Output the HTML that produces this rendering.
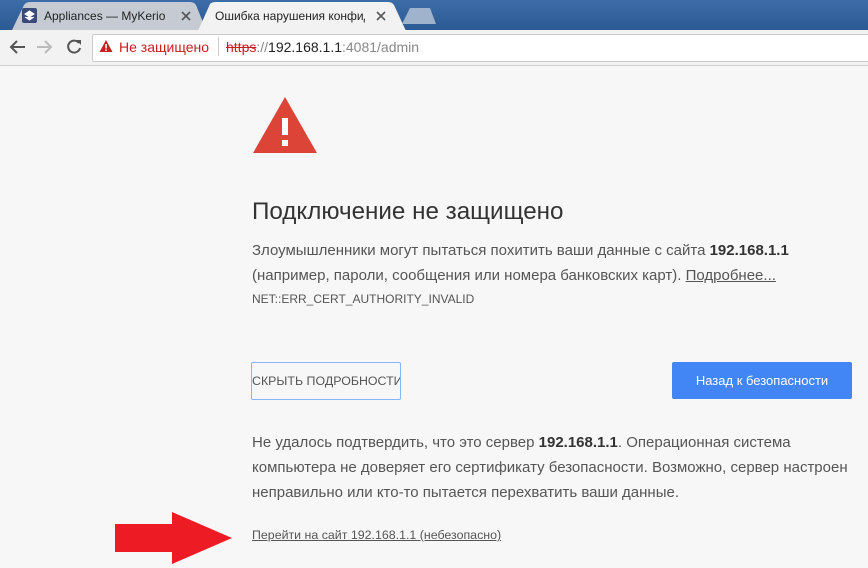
<!DOCTYPE html><html><head><meta charset="utf-8"><style>
body{margin:0;width:868px;height:568px;overflow:hidden;background:#f7f7f7;font-family:"Liberation Sans","Noto Sans CJK SC",sans-serif;position:relative}
.a{position:absolute}
.top{left:0;top:0;width:868px;height:30px;background:linear-gradient(#3c6ca7,#2c5a93)}
.tb{left:0;top:30px;width:868px;height:35px;background:#f2f2f2;border-bottom:1px solid #d0d0d0}
.t{font-size:12px;color:#222;white-space:nowrap}
p{margin:0}
.txt{font-size:15px;color:#555;line-height:25px}
</style></head><body>
<div class="a top"></div>
<svg class="a" style="left:0;top:0" width="868" height="31">
<path d="M12 30 L24 5 Q26 2 30 2 L190 2 Q194 2 196 5 L206 30 Z" fill="#c6cbd3"/>
<path d="M198 31 L210 4 Q212 2 216 2 L388 2 Q392 2 394 5 L406 31 Z" fill="#f2f2f2"/>
<path d="M402 24 L410 8 L430 8 L436 24 Z" fill="#9fb3cc"/>
<rect x="22" y="8" width="15" height="15" rx="2" fill="#3a4a7a"/>
<path d="M25 14 L29.5 11 L34 14 L29.5 17 Z M25 17 L29.5 20 L34 17" fill="#fff" stroke="#fff" stroke-width="1"/>
<path d="M182 12 L190 20 M190 12 L182 20 M377 12 L385 20 M385 12 L377 20" stroke="#555" stroke-width="1.6"/>
</svg>
<div class="a t" style="left:44px;top:9px">Appliances — MyKerio</div>
<div class="a t" style="left:215px;top:9px;width:150px;overflow:hidden">Ошибка нарушения конфид</div>
<div class="a tb"></div>
<svg class="a" style="left:0;top:30px" width="100" height="35">
<path d="M11 17 H25 M17 11 L11 17 L17 23" stroke="#555" stroke-width="2" fill="none"/>
<path d="M37 17 H51 M45 11 L51 17 L45 23" stroke="#bbb" stroke-width="2" fill="none"/>
<path d="M79 13 A6 6 0 1 0 80 18" stroke="#555" stroke-width="2" fill="none"/><path d="M76 10 L81 10 L81 15 Z" fill="#555"/>
</svg>
<div class="a" style="left:92px;top:34px;width:776px;height:26px;background:#fff;border:1px solid #ccc;border-radius:2px"></div>
<svg class="a" style="left:99px;top:39px" width="14" height="14"><path d="M7 1 L13.5 13 L0.5 13 Z" fill="#c5221f"/><rect x="6.3" y="5" width="1.5" height="4.5" fill="#fff"/><rect x="6.3" y="10.5" width="1.5" height="1.5" fill="#fff"/></svg>
<div class="a" style="left:119px;top:39px;font-size:14px;color:#c5221f">Не защищено</div>
<div class="a" style="left:218px;top:37px;width:1px;height:19px;background:#ccc"></div>
<div class="a" style="left:226px;top:39px;font-size:14px;color:#888"><span style="color:#c5221f;text-decoration:line-through">https</span>://<span style="color:#222">192.168.1.1</span>:4081/admin</div>
<svg class="a" style="left:252px;top:95px" width="66" height="60"><path d="M33 2 L65 58 L1 58 Z" fill="#db4437"/><rect x="30" y="23" width="6" height="17" fill="#fff"/><rect x="30" y="45" width="6" height="6" fill="#fff"/></svg>
<div class="a" style="left:252px;top:198px;font-size:24.2px;color:#333">Подключение не защищено</div>
<p class="a txt" style="left:252px;top:238px">Злоумышленники могут пытаться похитить ваши данные с сайта <b style="color:#333">192.168.1.1</b><br>(например, пароли, сообщения или номера банковских карт). <u>Подробнее...</u></p>
<div class="a" style="left:252px;top:292px;font-size:12px;color:#555">NET::ERR_CERT_AUTHORITY_INVALID</div>
<div class="a" style="left:251px;top:362px;width:148px;height:36px;border:1px solid #8ab4f8;border-radius:2px;font-size:12.4px;color:#555;line-height:36px;white-space:nowrap;overflow:hidden">СКРЫТЬ ПОДРОБНОСТИ</div>
<div class="a" style="left:672px;top:362px;width:180px;height:37px;background:#4285f4;border-radius:2px;color:#fff;font-size:13px;line-height:37px;text-align:center">Назад к безопасности</div>
<p class="a txt" style="left:252px;top:430px">Не удалось подтвердить, что это сервер <b style="color:#333">192.168.1.1</b>. Операционная система<br>компьютера не доверяет его сертификату безопасности. Возможно, сервер настроен<br>неправильно или кто-то пытается перехватить ваши данные.</p>
<div class="a" style="left:252px;top:528px;font-size:12.4px;color:#555;text-decoration:underline;white-space:nowrap">Перейти на сайт 192.168.1.1 (небезопасно)</div>
<svg class="a" style="left:0;top:0" width="240" height="568"><path d="M115 524 H172 V512 L232 538 L172 564 V552 H115 Z" fill="#ed1c24"/></svg>
</body></html>
